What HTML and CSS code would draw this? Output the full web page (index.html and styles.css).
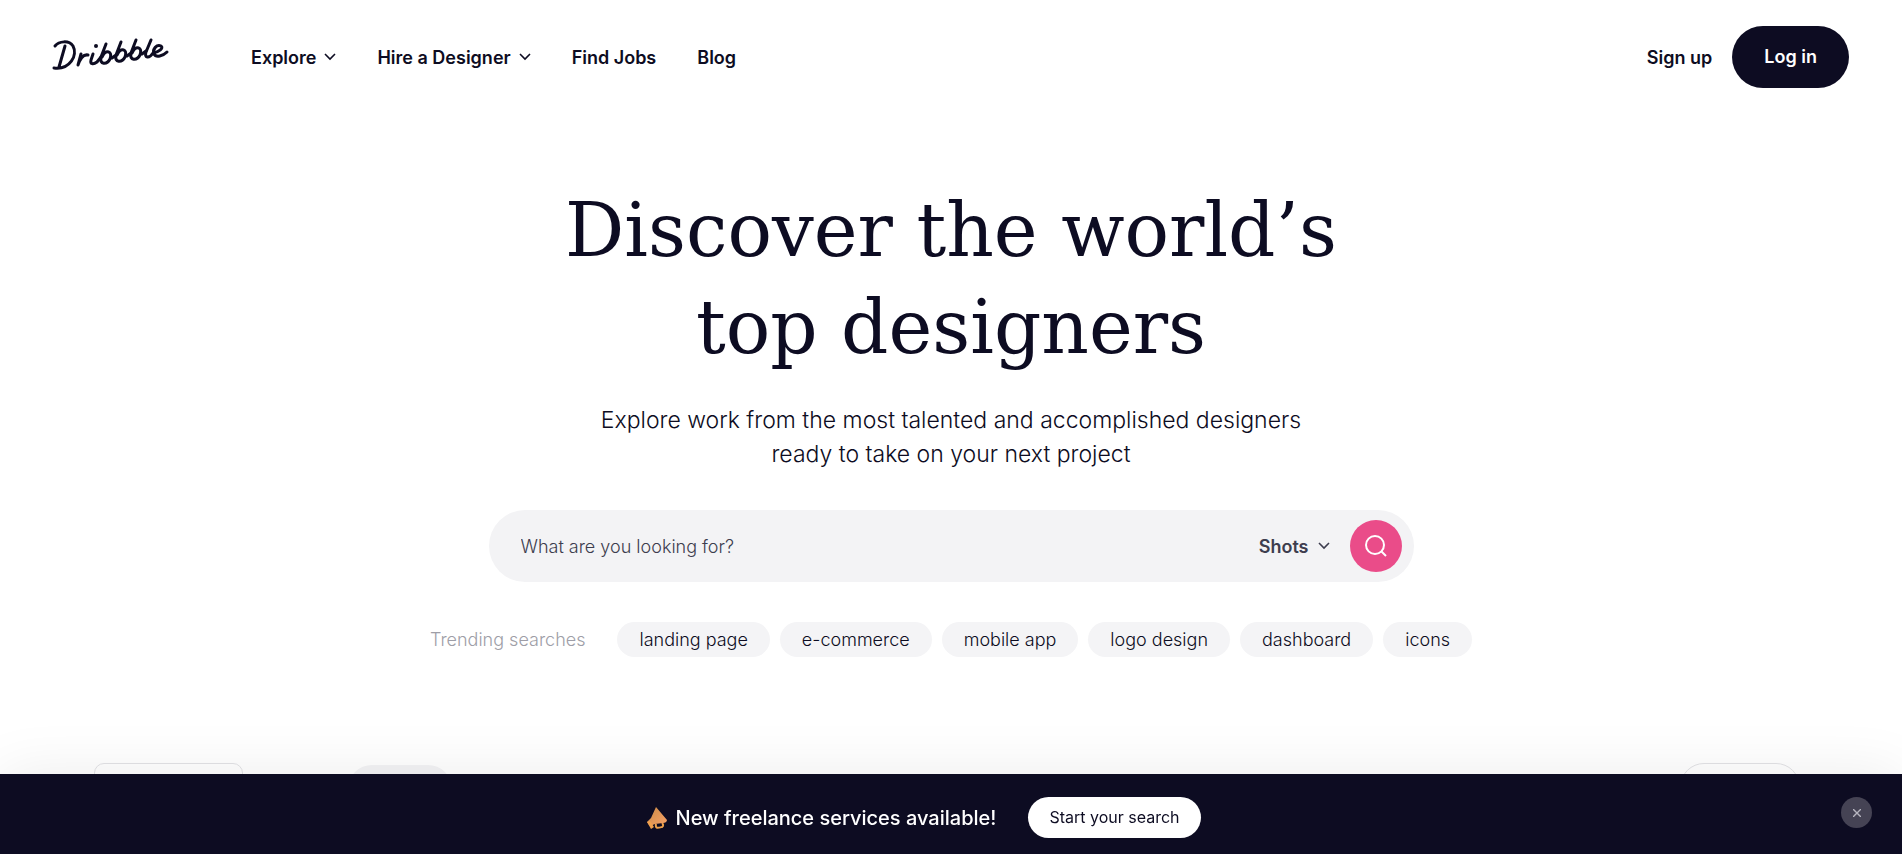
FILE: index.html
```
<!DOCTYPE html>
<html lang="en">
<head>
    <meta charset="UTF-8">
    <meta name="viewport" content="width=device-width, initial-scale=1.0">
    <title>Dribbble - Discover the World's Top Designers</title>
    <link rel="stylesheet" href="styles.css">
</head>
<body>
    <header class="site-header">
        <a href="#" class="logo" aria-label="Dribbble">
            <svg width="120" height="38" viewBox="0 0 120 38" fill="none" stroke="#0d0c22" stroke-width="3" stroke-linecap="round" stroke-linejoin="round">
                <!-- D -->
                <path d="M5 8C9 3 19 2 23 8C28 17 20 32 4 30M15 8L9 29"/>
                <!-- r, i -->
                <path d="M31 16L28 27C30 21 33 16 38 17M43 16L41 22C40 26 43 27 47 24L51 19"/>
                <circle cx="46" cy="8" r="2" fill="#0d0c22" stroke="none"/>
                <!-- b, b, b -->
                <path d="M56 6L51 19C49 27 57 27 60 21C63 13 56 11 52 19M62 20L66 17M71 4L66 17C64 25 72 25 75 19C78 11 71 9 67 17M77 18L81 15M86 2L81 15C79 23 87 23 90 17C93 9 86 7 82 15M92 16L96 13"/>
                <!-- l, e -->
                <path d="M101 2L96 14C94 20 99 21 103 15C109 14 114 10 111 8C107 6 102 11 104 16C106 20 113 18 117 14"/>
            </svg>
        </a>
        <nav class="main-nav">
            <a href="#">Explore <svg class="chevron" width="12" height="8" viewBox="0 0 12 8"><path d="M1 1l5 5 5-5"/></svg></a>
            <a href="#">Hire a Designer <svg class="chevron" width="12" height="8" viewBox="0 0 12 8"><path d="M1 1l5 5 5-5"/></svg></a>
            <a href="#">Find Jobs</a>
            <a href="#">Blog</a>
        </nav>
        <div class="account">
            <a href="#" class="signup">Sign up</a>
            <a href="#" class="login">Log in</a>
        </div>
    </header>

    <main>
        <section class="hero">
            <h1>Discover the world’s<br>top designers</h1>
            <p class="subtitle">Explore work from the most talented and accomplished designers<br>ready to take on your next project</p>

            <form class="search" role="search">
                <input type="text" class="search-input" placeholder="What are you looking for?" aria-label="Search">
                <div class="search-type">
                    <select aria-label="Search type">
                        <option>Shots</option>
                        <option>Designers</option>
                        <option>Services</option>
                    </select>
                    <svg class="chevron" width="12" height="8" viewBox="0 0 12 8"><path d="M1 1l5 5 5-5"/></svg>
                </div>
                <button type="submit" class="search-button" aria-label="Search">
                    <svg width="24" height="24" viewBox="0 0 24 24" fill="none" stroke="#fff" stroke-width="2"><circle cx="11" cy="11" r="9"/><path d="M17 17l5 5"/></svg>
                </button>
            </form>

            <div class="trending">
                <span class="trending-label">Trending searches</span>
                <ul>
                    <li><a href="#">landing page</a></li>
                    <li><a href="#">e-commerce</a></li>
                    <li><a href="#">mobile app</a></li>
                    <li><a href="#">logo design</a></li>
                    <li><a href="#">dashboard</a></li>
                    <li><a href="#">icons</a></li>
                </ul>
            </div>
        </section>

        <section class="filters">
            <button type="button" class="sort" aria-label="Popular"></button>
            <button type="button" class="category" aria-label="Discover"></button>
            <button type="button" class="filter" aria-label="Filters"></button>
        </section>
    </main>

    <aside class="banner">
        <p class="banner-text">
            <svg width="22" height="24" viewBox="0 0 22 24">
                <defs>
                    <linearGradient id="horn" x1="0" y1="0" x2="1" y2="1">
                        <stop offset="0" stop-color="#c98a45"/>
                        <stop offset="1" stop-color="#f8a268"/>
                    </linearGradient>
                </defs>
                <path d="M10 18C9 23 12 22 16 21C18 20 17 18 16 17" fill="none" stroke="#eea04a" stroke-width="2"/>
                <path d="M10 1L21 14C21 16 19 17 17 17L9 18L4 20L1 16L5 12Z" fill="url(#horn)"/>
                <path d="M1 16L4 15L8 21L5 23Z" fill="#f0a04e"/>
            </svg>
            New freelance services available!
        </p>
        <a href="#" class="banner-link">Start your search</a>
        <button type="button" class="banner-close" aria-label="Close">
            <svg width="8" height="8" viewBox="0 0 8 8"><path d="M0 0l8 8M8 0l-8 8" stroke="#b6b5bf" stroke-width="1.4"/></svg>
        </button>
    </aside>
</body>
</html>
```
FILE: styles.css
```
* {
    box-sizing: border-box;
}
body {
    font-family: Inter, "Liberation Sans", sans-serif;
    background-color: #fff;
    color: #0d0c22;
    margin: 0;
    height: 100vh;
    overflow: hidden;
}
a {
    color: inherit;
    text-decoration: none;
}
.chevron {
    fill: none;
    stroke: currentColor;
    stroke-width: 1.6;
}

/* Header */
.site-header {
    display: flex;
    align-items: center;
    padding: 26px 53px 0 50px;
}
.logo {
    display: flex;
    margin-right: 81px;
}
.main-nav {
    display: flex;
    gap: 41px;
    flex: 1;
    font-size: 18px;
    font-weight: 600;
}
.main-nav a {
    display: flex;
    align-items: center;
    gap: 8px;
}
.account {
    display: flex;
    align-items: center;
    gap: 20px;
    font-size: 18px;
    font-weight: 600;
}
.login {
    padding: 20px 32px;
    line-height: 22px;
    border-radius: 32px;
    background-color: #0d0c22;
    color: #fff;
}

/* Hero */
.hero {
    display: flex;
    flex-direction: column;
    align-items: center;
    padding-top: 94px;
    text-align: center;
}
h1 {
    margin: 0;
    font-family: "DejaVu Serif", serif;
    font-size: 74px;
    font-weight: 400;
    line-height: 97px;
}
.subtitle {
    margin: 27px 0 0;
    font-size: 23px;
    font-weight: 300;
    line-height: 34px;
}
.search {
    display: flex;
    align-items: center;
    width: 100%;
    max-width: 925px;
    margin-top: 39px;
    padding: 10px 12px 10px 32px;
    border-radius: 36px;
    background-color: #f3f3f5;
}
.search-input {
    flex: 1;
    min-width: 0;
    padding: 0;
    border: none;
    outline: none;
    background: transparent;
    font: inherit;
    font-size: 18px;
    font-weight: 300;
}
.search-input::placeholder {
    color: #3d3d4e;
    opacity: 1;
}
.search-type {
    display: flex;
    align-items: center;
    gap: 9px;
    margin-right: 20px;
    color: #3d3d4e;
}
.search-type select {
    appearance: none;
    padding: 0;
    border: none;
    background: transparent;
    color: inherit;
    font: inherit;
    font-size: 18px;
    font-weight: 600;
    field-sizing: content;
}
.search-button {
    display: flex;
    align-items: center;
    justify-content: center;
    width: 52px;
    height: 52px;
    padding: 0;
    border: none;
    border-radius: 50%;
    background-color: #ea4c89;
    cursor: pointer;
}
.trending {
    display: flex;
    align-items: center;
    gap: 32px;
    margin-top: 40px;
    font-size: 18px;
    font-weight: 300;
}
.trending-label {
    color: #9e9ea7;
}
.trending ul {
    display: flex;
    gap: 10px;
    margin: 0;
    padding: 0;
    list-style: none;
}
.trending li a {
    display: block;
    padding: 0 22px;
    border-radius: 18px;
    background-color: #f4f4f6;
    line-height: 35px;
}

/* Filter bar, mostly behind the banner */
.filters {
    display: flex;
    align-items: flex-start;
    padding: 106px 102px 0 94px;
}
.filters button {
    height: 48px;
    border: 1px solid #e3e3e6;
    background-color: #fff;
}
.filters .sort {
    width: 149px;
    border-radius: 10px;
}
.filters .category {
    width: 104px;
    margin: 2px auto 0 105px;
    border: none;
    border-radius: 24px;
    background-color: #f3f3f5;
}
.filters .filter {
    width: 120px;
    border-radius: 24px;
}

/* Bottom banner */
.banner {
    position: fixed;
    left: 0;
    right: 0;
    bottom: 0;
    display: flex;
    align-items: center;
    justify-content: center;
    gap: 32px;
    padding: 23px 56px 16px 0;
    background-color: #0d0c22;
    color: #fff;
    box-shadow: 0 0 60px rgba(0, 0, 0, 0.08);
}
.banner-text {
    display: flex;
    align-items: center;
    gap: 8px;
    margin: 0;
    font-size: 20px;
    font-weight: 500;
}
.banner-link {
    padding: 0 21px;
    border-radius: 21px;
    background-color: #fff;
    color: #0d0c22;
    font-size: 16px;
    line-height: 41px;
}
.banner-close {
    position: absolute;
    top: 23px;
    right: 30px;
    display: flex;
    align-items: center;
    justify-content: center;
    width: 31px;
    height: 31px;
    padding: 0;
    border: none;
    border-radius: 50%;
    background-color: #454354;
    cursor: pointer;
}
```
